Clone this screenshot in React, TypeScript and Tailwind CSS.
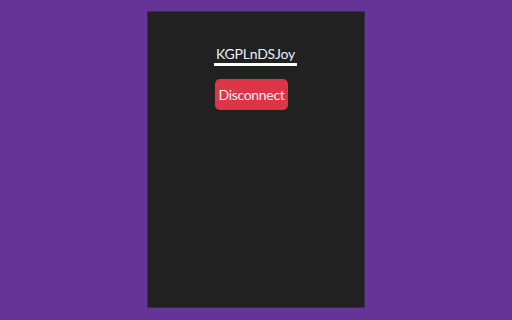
export default function App() {
  return (
    <div className="min-h-[320px] w-full bg-[#663399] flex justify-center pt-[11px]" style={{ fontFamily: 'Lato, "Noto Sans", sans-serif' }}>
      <div className="w-[218px] h-[297px] bg-[#212121] border border-[#3a2a52] flex flex-col">
        <div className="ml-[66px] mt-[32px] w-[83px] flex flex-col items-start">
          <div className="w-[83px] h-[22px] border-b-[3px] border-white text-[#e6f2fb] text-[14px] leading-[19px] text-center tracking-[-0.2px]">
            KGPLnDSJoy
          </div>
          <button className="mt-[13px] ml-[1px] w-[73px] h-[31px] rounded-[5px] bg-[#dc3545] text-[#fbeef0] text-[14px] leading-[20px] tracking-[-0.3px] flex items-center justify-center">
            Disconnect
          </button>
        </div>
      </div>
    </div>
  );
}
